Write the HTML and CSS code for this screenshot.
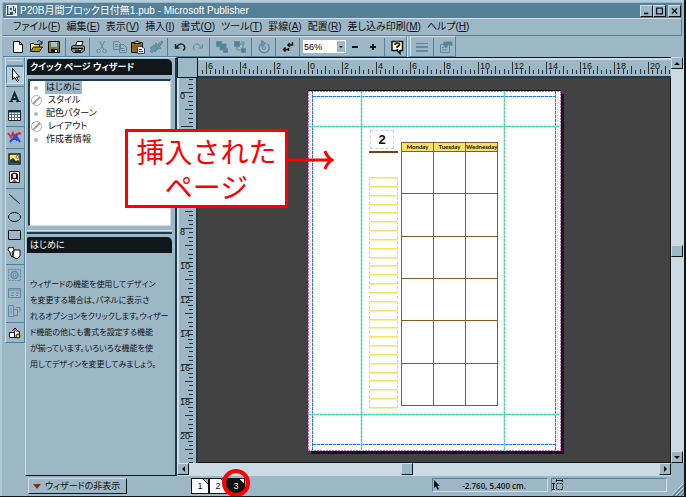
FILE: index.html
```html
<!DOCTYPE html>
<html lang="ja">
<head>
  <meta charset="UTF-8">
  <meta name="viewport" content="width=device-width, initial-scale=1.0">
  <title>P20B月間ブロック日付無1.pub - Microsoft Publisher</title>
  <link rel="stylesheet" href="styles.css">
</head>
<body>
  <div class="window">
    <header class="title-bar">
      <svg class="app-icon" viewBox="0 0 12 12"><path d="M0 0h11v11H0z" fill="#fff"/><path d="M1 1h9v9H1z" fill="#2d5268"/><path d="M3 9V2h3.500v4H3M7 7h2M7 9h3M8 2h2M8 4h1" stroke="#fff" stroke-width="1.300" fill="none"/></svg>
      <h1>P20B月間ブロック日付無1.pub - Microsoft Publisher</h1>
      <div class="window-buttons">
        <button aria-label="最小化"><svg viewBox="0 0 12 12"><path d="M3 9h5" stroke="#111" stroke-width="2"/></svg></button>
        <button aria-label="最大化"><svg viewBox="0 0 12 12"><path d="M2.500 3v6.500h7V3M2 2.500h8" stroke="#111" stroke-width="1.500" fill="none"/></svg></button>
        <button class="close" aria-label="閉じる"><svg viewBox="0 0 12 12"><path d="M3 3l6 6M9 3L3 9" stroke="#111" stroke-width="1.500"/></svg></button>
      </div>
    </header>

    <nav class="menu-bar">
      <button>ファイル(<u>F</u>)</button>
      <button>編集(<u>E</u>)</button>
      <button>表示(<u>V</u>)</button>
      <button>挿入(<u>I</u>)</button>
      <button>書式(<u>O</u>)</button>
      <button>ツール(<u>T</u>)</button>
      <button>罫線(<u>A</u>)</button>
      <button>配置(<u>R</u>)</button>
      <button>差し込み印刷(<u>M</u>)</button>
      <button>ヘルプ(<u>H</u>)</button>
    </nav>

    <div class="toolbars">
      <div class="toolbar">
        <button class="tool" aria-label="新規作成"><svg viewBox="0 0 16 16"><path d="M3.500 2.500h6l3 3v8h-9z" fill="#fff" stroke="#111"/><path d="M9.500 2.500v3h3" fill="none" stroke="#111"/></svg></button>
        <button class="tool" aria-label="開く"><svg viewBox="0 0 16 16"><path d="M2.500 12.500v-8h3l1 1h5v3" fill="#ffe94f" stroke="#111"/><path d="M2.500 12.500l3-4.500h9l-3 4.500z" fill="#b58f1b" stroke="#111"/><path d="M9 3q3-3 4.500 1M14 2v3h-3" fill="none" stroke="#111"/></svg></button>
        <button class="tool" aria-label="上書き保存"><svg viewBox="0 0 16 16"><path d="M2.500 2.500h11v11h-11z" fill="#7d7936" stroke="#111"/><path d="M5 3h6v5H5z" fill="#a9bec9"/><path d="M5 10h7v4H5z" fill="#111"/><path d="M9 11h2v2H9z" fill="#fff"/></svg></button>
        <span class="separator"></span>
        <button class="tool" aria-label="印刷"><svg viewBox="0 0 16 16"><path d="M5.500 7l1.500-4.500h6L11.500 7" fill="#fff" stroke="#111"/><path d="M1.500 7.500l2-1h9l2 1v4l-3 2h-8l-2-2z" fill="#8a969c" stroke="#111"/><path d="M2 9.500h11M5 12h6" stroke="#111" stroke-width="1.500"/><path d="M9 10.500h2" stroke="#fff"/></svg></button>
        <span class="separator"></span>
        <button class="tool" aria-label="切り取り"><svg viewBox="0 0 16 16" class="dim"><path d="M5.500 2l4 8M10.500 2l-4 8"/><circle cx="4.500" cy="12" r="1.800"/><circle cx="10.500" cy="12" r="1.800"/></svg></button>
        <button class="tool" aria-label="コピー"><svg viewBox="0 0 16 16" class="dim"><path d="M1.500 2.500h5l2 2v6h-7zM3 5.500h3M3 7.500h3"/><path d="M7.500 5.500h4l3 3v5h-7zM9 9.500h3M9 11.500h4"/></svg></button>
        <button class="tool" aria-label="貼り付け"><svg viewBox="0 0 16 16"><path d="M1.500 3.500h11v10h-11z" fill="#94631d" stroke="#111"/><path d="M4 4.500V3h2q1-3 2 0h2v1.500z" fill="#eee3a5" stroke="#111"/><path d="M7.500 7.500h4l3 2v5h-7z" fill="#fff" stroke="#36367e"/><path d="M9 10.500h3M9 12.500h4" stroke="#36367e"/></svg></button>
        <button class="tool" aria-label="書式のコピー"><svg viewBox="0 0 16 16" class="dim"><path d="M10 5l4-3 1 1-3 4z" fill="#6f94a8"/><path d="M8 4l5 5-2 1-4-4zM6 6l4 4-3 3-1-2-2 3-2-2 2-2-2-1z" fill="#6f94a8"/></svg></button>
        <span class="separator"></span>
        <button class="tool" aria-label="元に戻す"><svg viewBox="0 0 16 16"><path d="M3.500 5v4h4M4 8.500q5-6 8-2 2 3-1 5" fill="none" stroke="#152735" stroke-width="1.500"/></svg></button>
        <button class="tool" aria-label="やり直し"><svg viewBox="0 0 16 16" class="dim"><path d="M12.500 5v4h-4M12 8.500q-5-6-8-2-2 3 1 5"/></svg></button>
        <span class="separator"></span>
        <button class="tool" aria-label="最前面へ移動"><svg viewBox="0 0 16 16" class="dim"><path d="M2.500 2.500h5v5h-5zM9.500 9.500h4v4h-4z" fill="#54809a"/><path d="M6 5h6v6H6z" fill="#54809a"/></svg></button>
        <button class="tool" aria-label="最背面へ移動"><svg viewBox="0 0 16 16" class="dim"><path d="M5 5h6v6H5z"/><path d="M2.500 2.500h5v5h-5zM9.500 9.500h4v4h-4z" fill="#54809a"/><path d="M9 3h3v3"/></svg></button>
        <span class="separator"></span>
        <button class="tool" aria-label="回転"><svg viewBox="0 0 16 16" class="dim"><path d="M5 5a5 5 0 1 0 6.500 0M6 2l3 2.500L6 7z" stroke-width="1.500"/><circle cx="8" cy="9" r="1.500"/></svg></button>
        <span class="separator"></span>
        <button class="tool" aria-label="編集記号"><svg viewBox="0 0 16 16"><path d="M12.500 3v3H8M10 4L8 6l2 2M3 10.500h6M5.500 8.500l-2 2 2 2M8.500 9v3" fill="none" stroke="#111" stroke-width="1.500"/></svg></button>
        <span class="separator"></span>
        <div class="zoom-box">
          <select aria-label="ズーム">
            <option>56%</option>
            <option>100%</option>
          </select>
          <span class="zoom-arrow"></span>
        </div>
        <button class="tool" aria-label="縮小"><svg viewBox="0 0 16 16"><path d="M5 8h6" stroke="#111" stroke-width="2"/></svg></button>
        <button class="tool" aria-label="拡大"><svg viewBox="0 0 16 16"><path d="M5 8h6M8 5v6" stroke="#111" stroke-width="2"/></svg></button>
        <span class="separator"></span>
        <button class="tool" aria-label="ヘルプ"><svg viewBox="0 0 16 16"><path d="M3 2.500h10.500v9H11v3l-3-3H3z" fill="#fff" stroke="#111" stroke-width="1.500"/><path d="M6 6q0-2 2.200-2 2.300 0 2.300 1.800 0 1-2.300 2V9M8.200 10v1" fill="none" stroke="#e5d262" stroke-width="3"/><path d="M6 6q0-2 2.200-2 2.300 0 2.300 1.800 0 1-2.300 2V9M8.200 10v1" fill="none" stroke="#111" stroke-width="1.500"/></svg></button>
      </div>
      <div class="toolbar format-bar">
        <button class="tool" aria-label="線のスタイル"><svg viewBox="0 0 16 16" class="dim"><path d="M2 4.500h12"/><path d="M2 8h12" stroke-width="2"/><path d="M2 12h12" stroke-width="2"/></svg></button>
        <span class="separator"></span>
        <button class="tool" aria-label="プロパティ"><svg viewBox="0 0 16 16" class="dim"><path d="M2.500 5.500h9v8h-9zM4 8.500h2M4 11h5"/><path d="M6 3h8v4l-3-2-3 4-2-2z" fill="#54809a"/></svg></button>
      </div>
    </div>

    <main class="workspace">
      <div class="object-bar">
        <button class="tool pressed" aria-label="選択"><svg viewBox="0 0 16 16"><path d="M5.500 1.500v11l2.500-2 2 4 1.500-.800-2-3.700h3z" fill="#fff" stroke="#111"/></svg></button>
        <span class="separator"></span>
        <button class="tool" aria-label="テキスト枠"><svg viewBox="0 0 16 16"><path d="M4 13L7.500 4l4 9M5 10h5" fill="none" stroke="#152735" stroke-width="2"/><path d="M2 12.500h4M9 12.500h5" stroke="#152735"/></svg></button>
        <button class="tool" aria-label="表"><svg viewBox="0 0 16 16"><path d="M1.500 3.500h12v10h-12z" fill="#fff" stroke="#152735"/><path d="M1 4.500h13" stroke="#152735" stroke-width="2"/><path d="M2 7.500h11M2 10.500h11M4.500 5v8M7.500 5v8M10.500 5v8" stroke="#527085"/></svg></button>
        <span class="separator"></span>
        <button class="tool" aria-label="ワードアート"><svg viewBox="0 0 16 16"><path d="M1 4l3 4 2-4 2 4 4-4 2 1" fill="none" stroke="#e92b35" stroke-width="2"/><path d="M3 13l6-7 1 6M6 10h4M10 8l3 5" fill="none" stroke="#314bd0" stroke-width="2"/></svg></button>
        <span class="separator"></span>
        <button class="tool" aria-label="図"><svg viewBox="0 0 16 16"><path d="M2 3h11v10H2z" fill="#ffe754" stroke="#152735" stroke-width="1.500"/><path d="M3 12V9l3-2 3 3 2-1 2 2v1z" fill="#28383f"/><circle cx="10.500" cy="6" r="1.500" fill="#fff" stroke="#111" stroke-width=".5"/></svg></button>
        <button class="tool" aria-label="クリップアート"><svg viewBox="0 0 16 16"><path d="M2.500 2.500h10v11h-10z" fill="#fff" stroke="#152735"/><path d="M4 11V5q3-3 7 0v6l-2-1H6z" fill="#341018"/><path d="M6 5h3v4H6z" fill="#ffd5cf"/><path d="M5 13l2-3 3 3z" fill="#cb3648"/></svg></button>
        <span class="separator"></span>
        <button class="tool" aria-label="直線"><svg viewBox="0 0 16 16"><path d="M2 3l11 10" stroke="#111"/></svg></button>
        <button class="tool" aria-label="円"><svg viewBox="0 0 16 16"><ellipse cx="7.500" cy="8" rx="6" ry="4.500" fill="none" stroke="#111"/></svg></button>
        <button class="tool" aria-label="四角形"><svg viewBox="0 0 16 16"><path d="M1.500 3.500h12v9h-12z" fill="none" stroke="#111"/></svg></button>
        <button class="tool" aria-label="ユーザー設定の図形"><svg viewBox="0 0 16 16"><path d="M2 2l2 1 2-1 1 3-2 2 1 5-2-1-1-4-2-2z" fill="#fff" stroke="#111"/><path d="M7 5h6v6l-3 3-4-2z" fill="#fff" stroke="#111"/></svg></button>
        <span class="separator"></span>
        <button class="tool" aria-label="ホットスポット"><svg viewBox="0 0 16 16" class="dim"><path d="M1.500 2.500h12v11h-12z" stroke-dasharray="2 1"/><circle cx="7.500" cy="8" r="3.500" stroke-width="1.500"/><circle cx="7.500" cy="8" r="1.500"/></svg></button>
        <button class="tool" aria-label="フォーム"><svg viewBox="0 0 16 16" class="dim"><path d="M1.500 3.500h12v9h-12zM2 5h11M4 8h3M9 8h3M4 10.500h3M9 10.500h2"/></svg></button>
        <button class="tool" aria-label="HTMLコード"><svg viewBox="0 0 16 16" class="dim"><path d="M1.500 2.500h5v11h-5zM6.500 6.500h4v6h-4zM9 4.500h4v4M3 6h2M3 9h2"/></svg></button>
        <span class="separator"></span>
        <button class="tool" aria-label="デザイン ギャラリー"><svg viewBox="0 0 16 16"><path d="M2.500 7.500h5v5h-5zM7.500 5.500l5 1v6h-5z" fill="#fff" stroke="#111"/><path d="M5 6l3-3 3 3" fill="#c35bb0" stroke="#111"/><circle cx="11" cy="11" r="2" fill="#e7d45c" stroke="#111"/></svg></button>
      </div>

      <aside class="wizard">
        <h2 class="panel-title">クイック ページ ウィザード</h2>
        <ul class="wizard-list">
          <li class="selected"><span>はじめに</span></li>
          <li class="ring"><span>スタイル</span></li>
          <li><span>配色パターン</span></li>
          <li class="ring"><span>レイアウト</span></li>
          <li><span>作成者情報</span></li>
        </ul>
        <div class="splitter"></div>
        <h3 class="panel-title plain">はじめに</h3>
        <p class="wizard-text">ウィザードの機能を使用してデザイン<br>を変更する場合は、パネルに表示さ<br>れるオプションをクリックします。ウィザー<br>ド機能の他にも書式を設定する機能<br>が揃っています。いろいろな機能を使<br>用してデザインを変更してみましょう。</p>
      </aside>

      <section class="document">
        <div class="ruler-corner"></div>
        <div class="ruler ruler-top"><svg id="rulerTop"></svg></div>
        <div class="scrollbar vertical">
          <button aria-label="上へ"><span class="arrow up"></span></button>
          <div class="track"><span class="thumb"></span></div>
          <button aria-label="下へ"><span class="arrow down"></span></button>
        </div>
        <div class="ruler ruler-left"><svg id="rulerLeft"></svg></div>
        <div class="pasteboard">
          <div class="page">
            <div class="page-number">2</div>
            <div class="number-rule"></div>
            <div class="memo-lines" id="memoLines"></div>
            <table class="calendar">
              <thead>
                <tr><th>Monday</th><th>Tuesday</th><th>Wednesday</th></tr>
              </thead>
              <tbody id="weeks"></tbody>
            </table>
            <svg class="guides" viewBox="0 0 253 360">
              <g fill="none">
                <path d="M0 .5h253M0 359.500h253M.5 0v360M252.500 0v360" stroke="#f05be0" stroke-dasharray="2 1"/>
                <path d="M249.500 5v350M2.500 5v350" stroke="#e8d3ef" stroke-dasharray="2 1"/>
                <path d="M5 5.500h243M5 353.500h243M4.500 0v360M247.500 0v360" stroke="#9cc6f8"/>
                <path d="M5 5.500h243M5 353.500h243M4.500 0v360M247.500 0v360" stroke="#1f74f0" stroke-dasharray="3 1"/>
                <path d="M0 35.500h253M0 323.500h253M53.500 0v360M196.500 0v360" stroke="#a9e6d2" stroke-width="2"/>
                <path d="M0 35.500h253M0 323.500h253M53.500 0v360M196.500 0v360" stroke="#47d6a5" stroke-dasharray="3 1"/>
              </g>
            </svg>
          </div>
        </div>
        <div class="scrollbar horizontal">
          <button aria-label="左へ"><span class="arrow left"></span></button>
          <div class="track"><span class="thumb"></span></div>
          <button aria-label="右へ"><span class="arrow right"></span></button>
        </div>
      </section>
    </main>

    <footer class="status-bar">
      <div class="status-left">
        <button class="hide-wizard"><span class="red-arrow"></span>ウィザードの非表示</button>
      </div>
      <div class="page-tabs">
        <button class="page-tab">1</button>
        <button class="page-tab">2</button>
        <button class="page-tab current">3</button>
        <svg class="circle-mark" viewBox="0 0 28 28"><circle cx="14" cy="14" r="12" fill="none" stroke="#f00" stroke-width="4"/></svg>
      </div>
      <div class="status-field position">
        <svg viewBox="0 0 8 12"><path d="M1 1v8l2-1.500L4.500 11 6 10 4.500 7H7z" fill="#111"/></svg>
        <span>-2.760, 5.400 cm.</span>
      </div>
      <div class="status-field">
        <svg class="size-icon" viewBox="0 0 12 12"><path d="M4.500 4.500h6v6h-6z" fill="none" stroke="#111" stroke-dasharray="2 1"/><path d="M1.500 4v7M0 4.500h3M0 10.500h3M4 1.500h7M4.500 0v3M10.500 0v3" stroke="#111"/></svg>
      </div>
      <svg class="grip" viewBox="0 0 12 12"><path d="M1 12L12 1M5 12l7-7M9 12l3-3" stroke="#54809a" stroke-width="1.500"/><path d="M0 11L11 0M4 11l7-7" stroke="#d5e2e9"/></svg>
    </footer>

    <div class="callout" id="callout">
      <p>挿入された<br>ページ</p>
      <svg class="callout-arrow" viewBox="0 0 46 22"><path d="M0 11h44M37 2q2 6 7 9-5 3-7 9" fill="none" stroke="#f00" stroke-width="3"/></svg>
    </div>
  </div>

  <script>
    const CM = 17;
    const callout = document.getElementById('callout').getBoundingClientRect();

    // Rulers
    function drawRuler(svg, zero, vertical) {
      const box = svg.getBoundingClientRect();
      const length = vertical ? box.height : box.width;
      let ticks = '';
      let labels = '';
      for (let q = -Math.floor(zero / CM * 4); ; q++) {
        const pos = Math.round(zero + q * CM / 4);
        if (pos > length) break;
        const size = q % 8 === 0 ? 12 : q % 4 === 0 ? 8 : q % 2 === 0 ? 5 : 4;
        ticks += vertical ? `M${16 - size} ${pos + 0.5}h${size}` : `M${pos + 0.5} ${16 - size}v${size}`;
        if (q % 8 !== 0 || pos + 12 > length) continue;

        // numbers under the callout are left out
        const y = box.top + pos;
        if (vertical && y + 9 > callout.top && y < callout.bottom) continue;

        const num = Math.abs(q / 4);
        labels += vertical
          ? `<text x="3" y="${pos + 7}">${num}</text>`
          : `<text x="${pos + 2}" y="11">${num}</text>`;
      }
      svg.innerHTML = `<path d="${ticks}" stroke="#26343c"/>${labels}`;
    }

    function drawRulers() {
      drawRuler(document.getElementById('rulerTop'), 110, false);
      drawRuler(document.getElementById('rulerLeft'), 14, true);
    }

    // Page contents
    function drawPage() {
      document.getElementById('memoLines').innerHTML = '<span></span>'.repeat(27);
      document.getElementById('weeks').innerHTML = '<tr><td></td><td></td><td></td></tr>'.repeat(6);
    }

    drawRulers();
    drawPage();
  </script>
</body>
</html>
```
FILE: styles.css
```css
:root {
  --face: #9db7c6;
  --light: #d0dfe7;
  --shade: #54809a;
  --dark: #10171b;
  --track: #ccdae3;
  --board: #424242;
  --mark: #ff0000;
}

* {
  margin: 0;
  padding: 0;
  box-sizing: border-box;
}

body {
  font-family: "Liberation Sans", "Noto Sans CJK JP", sans-serif;
  font-feature-settings: "palt";
  font-size: 10px;
  line-height: 14px;
  color: #111;
  background: var(--dark);
}

button {
  font: inherit;
  color: inherit;
  background: none;
  border: none;
  font-feature-settings: inherit;
}

svg {
  display: block;
}

.window {
  position: relative;
  display: flex;
  flex-direction: column;
  height: 100vh;
  background: var(--face);
  border-right: 2px solid var(--dark);
  border-bottom: 1px solid var(--dark);
  box-shadow: inset 2px 2px #b3cbd8;
  overflow: hidden;
}

/* Title and menu */
.title-bar {
  display: flex;
  align-items: center;
  height: 15px;
  margin: 3px 2px 0 3px;
  padding: 0 1px 0 3px;
  gap: 2px;
  background: var(--shade);
  color: #fff;
}

.app-icon {
  width: 12px;
  height: 12px;
}

h1 {
  flex: 1;
  font-size: 10px;
  font-weight: normal;
  line-height: 14px;
  white-space: nowrap;
}

.window-buttons {
  display: flex;
}

.window-buttons button {
  width: 13px;
  height: 12px;
  background: var(--face);
  border: 1px solid var(--dark);
  border-top-color: var(--light);
  border-left-color: var(--light);
}

.window-buttons .close {
  margin-left: 2px;
}

.window-buttons svg {
  width: 11px;
  height: 10px;
}

.menu-bar {
  display: flex;
  align-items: center;
  gap: 6px;
  height: 18px;
  margin: 0 2px 0 3px;
  padding-left: 10px;
  border-top: 1px solid var(--light);
  border-bottom: 1px solid var(--shade);
  border-right: 1px solid var(--shade);
  white-space: nowrap;
}

/* Toolbars */
.toolbars {
  display: flex;
  height: 21px;
  margin: 0 2px 0 3px;
}

.toolbar {
  display: flex;
  align-items: center;
  padding-left: 6px;
  border-top: 1px solid var(--light);
  border-right: 1px solid var(--shade);
  border-bottom: 1px solid var(--shade);
}

.format-bar {
  padding-left: 2px;
  border-left: 4px double var(--light);
}

.tool {
  display: flex;
  align-items: center;
  justify-content: center;
  flex: none;
  width: 18px;
  height: 18px;
}

.tool svg {
  flex: none;
  width: 16px;
  height: 16px;
}

.tool.pressed {
  background: #b8cdd9;
  border: 1px solid var(--shade);
  border-right-color: var(--light);
  border-bottom-color: var(--light);
}

.dim {
  fill: none;
  stroke: #628ba3;
}

.toolbar .separator {
  width: 6px;
  height: 18px;
  border-right: 3px solid transparent;
  border-left: 2px solid transparent;
  background: var(--shade);
  background-clip: padding-box;
}

.zoom-box {
  position: relative;
  width: 43px;
  height: 13px;
  background: #fff;
}

.zoom-box select {
  display: block;
  width: 100%;
  height: 13px;
  padding-left: 1px;
  border: none;
  background: transparent;
  appearance: none;
  font-family: "Liberation Sans", sans-serif;
  font-size: 9px;
}

.zoom-arrow {
  position: absolute;
  top: 1px;
  right: 1px;
  width: 8px;
  height: 11px;
  background: var(--face);
  pointer-events: none;
}

.zoom-arrow::after {
  content: "";
  position: absolute;
  top: 5px;
  left: 2px;
  border: 2px solid transparent;
  border-top-color: #111;
}

/* Workspace */
.workspace {
  flex: 1;
  display: grid;
  grid-template-columns: 20px 152px 1fr;
  min-height: 0;
  margin-left: 5px;
}

.object-bar {
  display: flex;
  flex-direction: column;
  align-items: center;
  align-self: start;
  padding-top: 2px;
  border: 1px solid var(--shade);
  border-left-color: var(--light);
  border-top-color: var(--light);
}

.object-bar::before {
  content: "";
  width: 16px;
  height: 4px;
  border-top: 1px solid var(--light);
  border-bottom: 1px solid var(--shade);
}

.object-bar .separator {
  width: 18px;
  height: 4px;
  border-top: 2px solid transparent;
  border-bottom: 1px solid transparent;
  background: var(--shade);
  background-clip: padding-box;
}

.wizard {
  display: flex;
  flex-direction: column;
  min-width: 0;
  padding: 1px 3px 0 1px;
  border: 1px solid var(--light);
  border-right: 2px solid #1f3b4b;
  border-bottom: 1px solid var(--dark);
}

.panel-title {
  flex: none;
  height: 16px;
  padding-left: 3px;
  border-radius: 2px 5px 0 0;
  background: var(--dark);
  color: #fff;
  font-size: 9px;
  font-weight: bold;
  line-height: 16px;
}

.panel-title.plain {
  font-weight: normal;
}

.wizard-list {
  flex: none;
  height: 147px;
  margin: 4px 1px;
  border: 1px solid var(--light);
  border-top: 2px solid #1f3b4b;
  border-left: 2px solid #1f3b4b;
  background: #fff;
  font-size: 9px;
  list-style: none;
}

.wizard-list li {
  display: flex;
  align-items: center;
  height: 13px;
  line-height: 13px;
}

.wizard-list li::before {
  content: "";
  width: 4px;
  height: 4px;
  margin: 0 7px 0 4px;
  border-radius: 50%;
  background: #b9b9b9;
}

.wizard-list .ring::before {
  width: 9px;
  height: 9px;
  margin: 0 5px 0 1px;
  border: 1px solid #aaa;
  background: linear-gradient(135deg, #fff 43%, #aaa 43%, #aaa 57%, #fff 57%);
}

.wizard-list span {
  padding: 0 1px;
}

.wizard-list .selected span {
  background: var(--face);
}

.splitter {
  flex: none;
  height: 4px;
  margin-bottom: 3px;
  border-top: 1px solid var(--light);
  border-bottom: 2px solid #1f3b4b;
}

.wizard-text {
  margin-top: 24px;
  padding-left: 3px;
  font-size: 8px;
  line-height: 16px;
  white-space: nowrap;
}

/* Document area */
.document {
  display: grid;
  grid-template-columns: 21px 1fr 13px;
  grid-template-rows: 21px 1fr 13px;
  min-width: 0;
  min-height: 0;
}

.ruler-corner {
  border: 1px solid var(--dark);
  background: var(--face);
}

.ruler {
  overflow: hidden;
  min-width: 0;
  min-height: 0;
  background: var(--face);
}

.ruler svg {
  width: 100%;
  height: 100%;
}

.ruler text {
  font-family: "Liberation Sans", sans-serif;
  font-size: 9px;
  fill: #111;
}

.ruler-top {
  border-top: 1px solid var(--dark);
  border-bottom: 2px solid #1f3b4b;
  box-shadow: inset 0 2px var(--light);
}

.ruler-left {
  contain: size;
  border-right: 2px solid #1f3b4b;
  box-shadow: inset 2px 0 var(--light);
}

.pasteboard {
  display: flex;
  align-items: center;
  justify-content: center;
  min-width: 0;
  min-height: 0;
  padding: 2px 0 0 1px;
  overflow: hidden;
  background: var(--board);
  border-right: 1px solid var(--dark);
  border-bottom: 1px solid var(--dark);
}

.scrollbar {
  display: flex;
  background: var(--track);
}

.scrollbar.vertical {
  grid-column: 3;
  grid-row: 1 / 3;
  flex-direction: column;
}

.scrollbar.horizontal {
  grid-column: 1 / 3;
}

.scrollbar .track {
  flex: 1;
  display: flex;
}

.vertical .track {
  flex-direction: column;
}

.scrollbar button,
.thumb {
  display: flex;
  align-items: center;
  justify-content: center;
  flex: none;
  width: 12px;
  height: 12px;
  background: var(--face);
  border: 1px solid var(--dark);
  border-top-color: var(--light);
  border-left-color: var(--light);
}

.vertical .thumb {
  margin-top: 176px;
}

.horizontal .thumb {
  margin-left: 212px;
}

.arrow {
  border: 3px solid transparent;
}

.arrow.up {
  border-top-width: 0;
  border-bottom-color: #111;
}

.arrow.down {
  border-bottom-width: 0;
  border-top-color: #111;
}

.arrow.left {
  border-left-width: 0;
  border-right-color: #111;
}

.arrow.right {
  border-right-width: 0;
  border-left-color: #111;
}

/* Publication page */
.page {
  position: relative;
  flex: none;
  width: 253px;
  height: 360px;
  background: #fff;
  box-shadow: 0 -1px var(--dark), 3px 3px var(--dark);
}

.guides {
  position: absolute;
  inset: 0;
}

.page-number {
  position: absolute;
  top: 39px;
  left: 62px;
  width: 24px;
  height: 19px;
  border: 1px dashed #ccc;
  font-family: "Liberation Sans", sans-serif;
  font-size: 13px;
  font-weight: bold;
  line-height: 18px;
  text-align: center;
}

.number-rule {
  position: absolute;
  top: 60px;
  left: 61px;
  width: 29px;
  height: 2px;
  background: #74401f;
}

.memo-lines {
  position: absolute;
  top: 86px;
  left: 61px;
  display: flex;
  flex-direction: column;
  justify-content: space-between;
  width: 29px;
  height: 231px;
  border-left: 1px dashed #ccc;
  border-right: 1px dashed #ccc;
}

.memo-lines span {
  height: 1px;
  margin: 0 -1px;
  background: #f8e05c;
  box-shadow: 0 1px #fcf0a8;
}

.calendar {
  position: absolute;
  top: 51px;
  left: 93px;
  width: 97px;
  height: 264px;
  table-layout: fixed;
  border-collapse: collapse;
}

.calendar th,
.calendar td {
  border: 1px solid #87592b;
}

.calendar th {
  height: 9px;
  background: #fae067;
  font-family: Lato, sans-serif;
  font-size: 6px;
  line-height: 8px;
  white-space: nowrap;
}

/* Status bar */
.status-bar {
  display: flex;
  align-items: flex-start;
  gap: 3px;
  height: 20px;
  padding: 2px 0 0 28px;
}

.status-left {
  width: 160px;
}

.hide-wizard {
  display: flex;
  align-items: center;
  gap: 4px;
  height: 16px;
  padding: 0 6px 0 4px;
  border: 1px solid var(--light);
  border-right: 1px solid var(--dark);
  border-bottom: 1px solid var(--dark);
  font-size: 9px;
  white-space: nowrap;
}

.red-arrow {
  border: 4px solid transparent;
  border-top: 5px solid #8b2d12;
  border-bottom: none;
}

.page-tabs {
  position: relative;
  display: flex;
  flex: 1;
}

.page-tab {
  width: 18px;
  height: 16px;
  border: 1px solid #111;
  background: linear-gradient(225deg, var(--face) 3px, #111 3px, #111 4px, #fff 4px);
  font-size: 9px;
}

.page-tab.current {
  background: linear-gradient(225deg, #fff 3px, #111 3px);
  color: #fff;
}

.circle-mark {
  position: absolute;
  top: -9px;
  left: 31px;
  width: 28px;
  height: 28px;
}

.status-field {
  display: flex;
  width: 116px;
  height: 14px;
  border: 1px solid var(--light);
  border-top-color: var(--shade);
  border-left-color: var(--shade);
  font-family: "Open Sans", sans-serif;
  font-size: 8px;
  font-weight: 600;
  line-height: 13px;
}

.status-field svg {
  width: 8px;
  height: 12px;
}

.status-field .size-icon {
  width: 12px;
}

.status-field span {
  flex: 1;
  text-align: center;
}

.grip {
  align-self: flex-end;
  width: 12px;
  height: 12px;
  margin-left: 2px;
}

/* Callout over the document */
.callout {
  position: absolute;
  top: 129px;
  left: 125px;
  width: 163px;
  height: 79px;
  padding-top: 2px;
  border: 3px solid var(--mark);
  background: #fff;
  color: var(--mark);
  font-family: "Noto Sans CJK JP", sans-serif;
  font-size: 28px;
  font-feature-settings: normal;
  line-height: 35px;
  text-align: center;
}

.callout p {
  white-space: nowrap;
}

.callout-arrow {
  position: absolute;
  top: 17px;
  left: 160px;
  width: 46px;
  height: 22px;
}
```
